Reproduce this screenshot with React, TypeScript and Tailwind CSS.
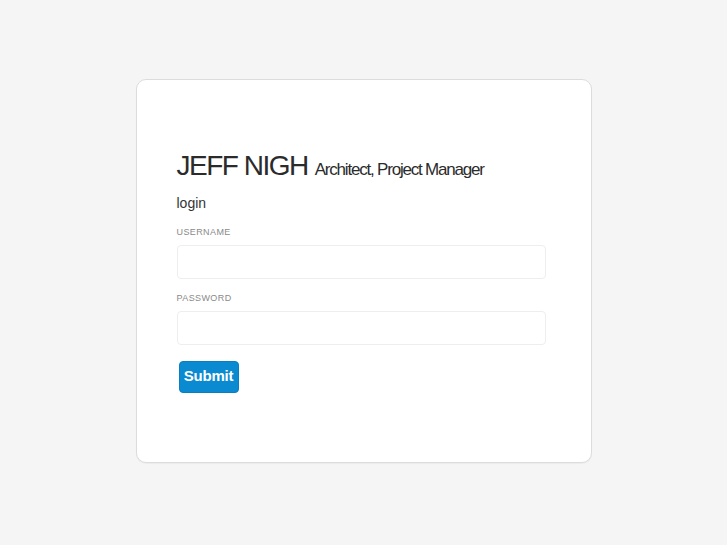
export default function App() {
  return (
    <div
      className="min-h-[545px] bg-[#f5f5f5] pt-[79px]"
      style={{ fontFamily: '"Liberation Sans", Arial, sans-serif' }}
    >
      <div className="mx-auto h-[384px] w-[456px] rounded-[10px] border border-[#dcdcdc] bg-white pl-[40px] pt-[70px] shadow-[0_1px_1px_rgba(0,0,0,0.04)]">
        <h1 className="flex items-baseline gap-[7px] text-[#2b2b2b]">
          <span className="text-[28px] leading-[32px] tracking-[-1.5px]">JEFF NIGH</span>
          <span className="text-[17px] tracking-[-1.2px]">Architect, Project Manager</span>
        </h1>

        <p className="mt-[10px] text-[14px] leading-[20px] text-[#333]">login</p>

        <form className="mt-[13px]">
          <label className="block">
            <span className="block text-[9px] leading-[12px] tracking-[0.4px] text-[#8a8a8a]">
              USERNAME
            </span>
            <input
              type="text"
              className="mt-[7px] block h-[34px] w-[369px] rounded-[4px] border border-[#eeeeee] bg-white outline-none"
            />
          </label>

          <label className="mt-[13px] block">
            <span className="block text-[9px] leading-[12px] tracking-[0.4px] text-[#8a8a8a]">
              PASSWORD
            </span>
            <input
              type="password"
              className="mt-[7px] block h-[34px] w-[369px] rounded-[4px] border border-[#eeeeee] bg-white outline-none"
            />
          </label>

          <button
            type="button"
            className="ml-[2px] mt-[16px] h-[32px] w-[60px] rounded-[4px] border border-[#0a7fbf] bg-[#0a8ad0] text-[15px] font-bold tracking-[-0.2px] text-white"
          >
            Submit
          </button>
        </form>
      </div>
    </div>
  );
}
